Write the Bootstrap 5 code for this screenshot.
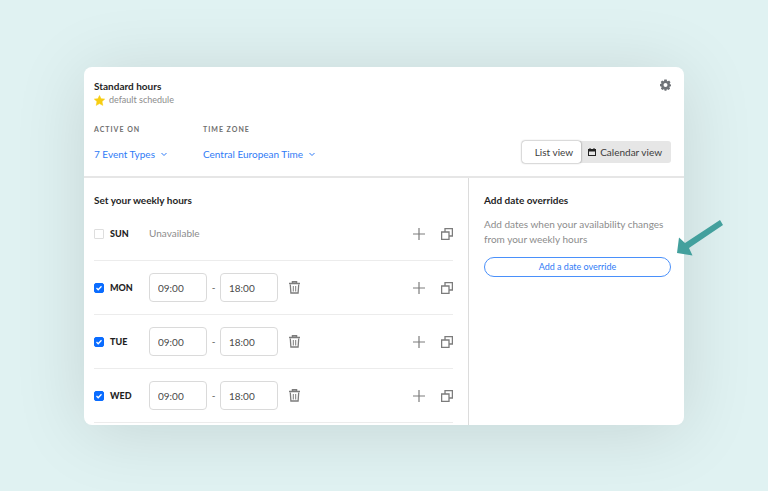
<!DOCTYPE html>
<html lang="en">
<head>
<meta charset="utf-8">
<meta name="viewport" content="width=device-width, initial-scale=1">
<title>Standard hours</title>
<link href="https://cdn.jsdelivr.net/npm/bootstrap@5.3.0/dist/css/bootstrap.min.css" rel="stylesheet">
<style>
body { background: #e0f2f2; color: #1f1f1f; font-family: Lato, "Liberation Sans", sans-serif; font-size: 10px; line-height: 15px; }
.stage { padding: 67px 84px 66px; }
.schedule { border-radius: 8px; box-shadow: 0 6px 72px rgba(0, 20, 20, .12); }
.schedule-head { padding: 12px 13px 13px 10px; border-bottom: 2px solid #e6e6e6; }
.heading { font-size: 10px; line-height: 14px; font-weight: 700; margin: 0; }
.note { font-size: 9px; line-height: 14px; color: #8c8c8c; }
.pickers { padding-bottom: 2px; }
.caption { font-size: 7px; line-height: 12px; font-weight: 700; color: #6f6f6f; letter-spacing: 1px; }
.picker { color: #2f7bf6; font-size: 10px; line-height: 14px; margin-top: 12px; gap: 5px; }
.first-picker { width: 109px; }
.views { background: #e6e6e6; border-radius: 3px; color: #3c3c3c; }
.views button { font-size: 10px; line-height: 20px; color: #3c3c3c; height: 22px; }
.views .chosen { background: #fff; border-radius: 3px; box-shadow: 0 0 2px rgba(0, 0, 0, .55); padding: 0 8px 0 13px; }
.views .other { padding: 0 9px 0 7px; }
.panes { display: grid; grid-template-columns: minmax(0, 1fr) 215px; }
.weekly { padding: 15px 15px 2px 10px; border-right: 1px solid #dcdcdc; }
.overrides { padding: 15px 13px 15px 15px; }
.overrides p { margin: 10px 0; }
.day-row { height: 54px; border-bottom: 1px solid #ececec; }
.day { width: 55px; font-size: 9px; font-weight: 900; gap: 6px; }
.day input { appearance: none; width: 10px; height: 10px; margin: 0; border: 1px solid #dedede; border-radius: 1px; background: #fff; }
.day input:checked { border-color: #0a6cff; background: #0a6cff; border-radius: 2px; }
.tick { position: absolute; left: 0; top: 50%; margin-top: -5px; pointer-events: none; }
.time { width: 58px; height: 29px; border: 1px solid #dadada; border-radius: 4px; padding: 0 8px; color: #4a4a4a; font-size: 10px; background: #fff; }
.dash { width: 13px; text-align: center; color: #555; }
.soft { color: #8c8c8c; }
.tool { color: #7c7c7c; line-height: 0; }
.remove { margin-left: 11px; }
.override-btn { border: 1px solid #4a90fa; border-radius: 10px; color: #2f7bf6; background: #fff; font-size: 9px; line-height: 18px; }
.pointer { position: absolute; right: -39px; top: 153px; }
</style>
</head>
<body>
<main class="stage">
<div class="position-relative">
<section class="schedule bg-white overflow-hidden">
  <header class="schedule-head d-flex justify-content-between">
    <div>
      <h1 class="heading">Standard hours</h1>
      <div class="note d-flex align-items-center gap-1">
        <svg width="11" height="11" viewBox="0 0 22 22" fill="#f7cd12" stroke="#f7cd12" stroke-linejoin="round" aria-hidden="true"><path d="M11 1l3.200 6.300 7.300.8-5.400 5.100 1.500 7.600L11 17.200l-6.600 3.600 1.500-7.600L.5 8.100l7.300-.8z"/></svg>
        <span>default schedule</span>
      </div>
      <div class="pickers d-flex mt-3">
        <div class="first-picker">
          <div class="caption" id="active-label">ACTIVE ON</div>
          <button type="button" class="picker btn p-0 border-0 d-flex align-items-center" aria-describedby="active-label">7 Event Types
            <svg width="8" height="6" viewBox="0 0 8 6" fill="none" stroke="currentColor"><path d="M1.500 2L4 4.500 6.500 2"/></svg></button>
        </div>
        <div>
          <div class="caption" id="zone-label">TIME ZONE</div>
          <button type="button" class="picker btn p-0 border-0 d-flex align-items-center" aria-describedby="zone-label">Central European Time
            <svg width="8" height="6" viewBox="0 0 8 6" fill="none" stroke="currentColor"><path d="M1.500 2L4 4.500 6.500 2"/></svg></button>
        </div>
      </div>
    </div>
    <div class="d-flex flex-column align-items-end justify-content-between">
      <button type="button" class="tool btn p-0 border-0" aria-label="Settings">
        <svg width="11" height="12" viewBox="0 0 22 22"><path fill="#6f7378" fill-rule="evenodd" d="M8.500 0h5l.6 3 1.500.7L18.200 2 21 5.500l-1.600 2.600.5 1.400L22 10v3.500l-2.400.6-.8 1.500 1.500 2.600-3.200 2.700-2.500-1.500-1.200.5-.6 2.600H9.200l-.6-2.600-1.400-.6-2.400 1.600-3.100-2.800 1.500-2.500-.7-1.500L0 13.500V9l2.500-.5.5-1.300L1.300 5 4.400 1.800 6.600 3.500 8 3zM11 7a4 4 0 1 0 0 8 4 4 0 0 0 0-8z"/></svg>
      </button>
      <div class="views d-flex">
        <button type="button" class="chosen btn border-0">List view</button>
        <button type="button" class="other btn border-0 d-flex align-items-center gap-1">
          <svg width="8" height="8" viewBox="0 0 16 16"><path fill="#222" fill-rule="evenodd" d="M3 0h2v2h6V0h2v2h3v14H0V2h3zM2 7v7h12V7z"/></svg>
          Calendar view</button>
      </div>
    </div>
  </header>
  <div class="panes">
    <section class="weekly">
      <h2 class="heading">Set your weekly hours</h2>
      <div id="days"></div>
    </section>
    <aside class="overrides">
      <h2 class="heading">Add date overrides</h2>
      <p class="soft">Add dates when your availability changes from your weekly hours</p>
      <button type="button" class="override-btn w-100 p-0 d-block">Add a date override</button>
    </aside>
  </div>
</section>
<svg class="pointer" width="46" height="36" viewBox="0 0 46 36" aria-hidden="true"><path fill="#43a09d" d="M43 0l3 5L12 28l3.500 7.500L0 33 2 17.500l6 5.500z"/></svg>
</div>
</main>
<script>
const days = [["SUN", false], ["MON", true], ["TUE", true], ["WED", true]];
document.getElementById("days").innerHTML = days.map(([name, on]) => `
  <div class="day-row d-flex align-items-center">
    <label class="day d-flex align-items-center position-relative">
      <input type="checkbox" ${on ? "checked" : ""}>
      ${on ? '<svg class="tick" width="10" height="10" viewBox="0 0 10 10" fill="none" stroke="#fff" stroke-width="1.300"><path d="M2.500 5l1.700 1.700 3.300-3.400"/></svg>' : ""}
      ${name}
    </label>
    ${on ? `<input class="time" type="text" value="09:00" aria-label="${name} start">
    <span class="dash">-</span>
    <input class="time" type="text" value="18:00" aria-label="${name} end">
    <button type="button" class="tool remove btn p-0 border-0" aria-label="Delete ${name} hours">
      <svg width="11" height="13" viewBox="0 0 11 13" fill="none" stroke="currentColor"><path d="M3.500 2V.8h4V2M0 2.500h11" stroke-width="1.500"/><path d="M1.300 3.500l.6 8.500h7.200l.6-8.500" stroke-width="1.300"/><path d="M4.300 5v5.500M6.700 5v5.500" stroke-width="1"/></svg>
    </button>` : '<span class="soft">Unavailable</span>'}
    <div class="ms-auto d-flex align-items-center gap-3">
      <button type="button" class="tool btn p-0 border-0" aria-label="Add hours to ${name}">
        <svg width="12" height="12" viewBox="0 0 12 12" stroke="currentColor" stroke-width="1.200"><path d="M0 6h12M6 0v12"/></svg>
      </button>
      <button type="button" class="tool btn p-0 border-0" aria-label="Copy ${name} hours">
        <svg width="12" height="12" viewBox="0 0 12 12" fill="none" stroke="currentColor" stroke-width="1.300"><path d="M.6 4h7.400v7.400H.6zM4 4V.6h7.400V8H8"/></svg>
      </button>
    </div>
  </div>`).join("");
</script>
<script src="https://cdn.jsdelivr.net/npm/bootstrap@5.3.0/dist/js/bootstrap.bundle.min.js"></script>
</body>
</html>
